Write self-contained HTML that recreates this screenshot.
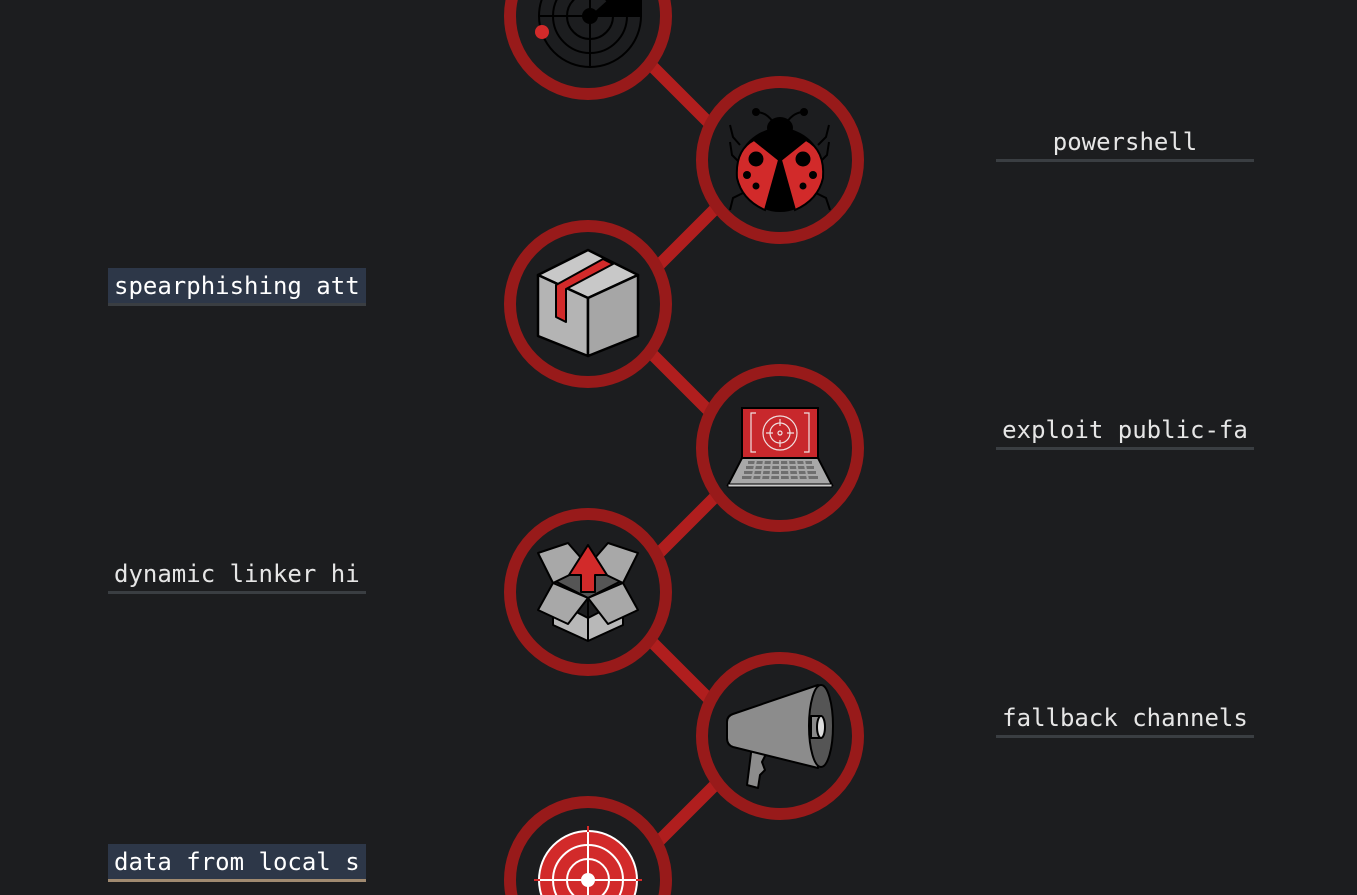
<!DOCTYPE html>
<html><head><meta charset="utf-8"><style>
html,body{margin:0;padding:0;background:#1c1d1f;width:1357px;height:895px;overflow:hidden;position:relative}
.lbl{position:absolute;width:258px;height:35px;border-bottom:3px solid #3a3e42;font-family:"DejaVu Sans Mono","Liberation Mono",monospace;font-size:24px;color:#e6e6e6;line-height:36px;box-sizing:content-box;white-space:nowrap;overflow:hidden}
.l{left:108px;text-indent:6px}
.r{left:996px;text-align:center}
.hl{background:#2d3748;color:#fff}
svg{position:absolute;left:0;top:0}
</style></head><body>
<svg width="1357" height="895" viewBox="0 0 1357 895">
<g stroke="#b01e1e" stroke-width="12">
<line x1="640" y1="54" x2="720" y2="134"/><line x1="640" y1="342" x2="720" y2="422"/><line x1="640" y1="630" x2="720" y2="710"/>
<line x1="722" y1="202" x2="650" y2="274"/><line x1="722" y1="490" x2="650" y2="562"/><line x1="722" y1="778" x2="650" y2="850"/>
</g>
<g fill="#1c1d1f" stroke="#981a1a" stroke-width="12">
<circle cx="588" cy="16" r="78"/><circle cx="780" cy="160" r="78"/><circle cx="588" cy="304" r="78"/>
<circle cx="780" cy="448" r="78"/><circle cx="588" cy="592" r="78"/><circle cx="780" cy="736" r="78"/>
<circle cx="588" cy="880" r="78"/>
</g>
<!-- radar -->
<g fill="none" stroke="#000" stroke-width="2">
<circle cx="590" cy="16" r="51"/><circle cx="590" cy="16" r="37"/><circle cx="590" cy="16" r="23"/>
<line x1="590" y1="-40" x2="590" y2="68"/><line x1="538" y1="16" x2="642" y2="16"/>
</g>
<path d="M590 16 L610 -2 L642 -8 L642 16Z" fill="#000"/>
<circle cx="590" cy="16" r="8" fill="#000"/>
<circle cx="542" cy="32" r="7" fill="#d22a2a"/>
<!-- ladybug -->
<g stroke="#000" stroke-width="2" fill="none">
<path d="M773 122 Q766 112 756 112 M787 122 Q794 112 804 112"/>
<path d="M740 145 L733 137 L730 125 M742 165 L732 155 L730 142 M745 192 L733 198 L730 210 M818 145 L826 137 L829 125 M817 165 L827 155 L829 142 M814 192 L826 198 L830 210"/>
</g>
<circle cx="756" cy="112" r="4"/><circle cx="804" cy="112" r="4"/>
<ellipse cx="780" cy="128" rx="13" ry="11"/>
<ellipse cx="780" cy="170" rx="43" ry="42" fill="#000"/>
<path d="M779 160 L765 210 Q742 200 737 178 Q735 150 754 140Z" fill="#d22a2a" stroke="#000" stroke-width="2"/>
<path d="M781 160 L795 210 Q818 200 823 178 Q825 150 806 140Z" fill="#d22a2a" stroke="#000" stroke-width="2"/>
<circle cx="756" cy="159" r="7.5"/><circle cx="803" cy="159" r="7.5"/>
<circle cx="747" cy="175" r="4"/><circle cx="813" cy="175" r="4"/>
<circle cx="756" cy="186" r="3.5"/><circle cx="803" cy="186" r="3.5"/>
<!-- box -->
<g stroke="#000" stroke-width="2.5" stroke-linejoin="round">
<path d="M538 275 L588 250 L638 275 L588 298Z" fill="#c8c8c8"/>
<path d="M538 275 L588 298 L588 356 L538 336Z" fill="#b4b4b4"/>
<path d="M638 275 L588 298 L588 356 L638 336Z" fill="#a6a6a6"/>
<path d="M556 285 L603 259 L613 264 L566 289 L566 322 L556 317Z" fill="#d22a2a" stroke-width="2"/>
</g>
<!-- laptop -->
<rect x="742" y="408" width="76" height="50" fill="#c8282c" stroke="#000" stroke-width="2"/>
<g stroke="#f0e0e0" fill="none" stroke-width="1.2">
<path d="M756 413 H751 V452 H756 M804 413 H809 V452 H804"/>
<circle cx="780" cy="433" r="17"/><circle cx="780" cy="433" r="10"/><circle cx="780" cy="433" r="2"/>
<path d="M780 419 V426 M780 440 V447 M766 433 H773 M787 433 H794"/>
</g>
<path d="M742 458 L818 458 L832 485 L728 485Z" fill="#a8a8a8" stroke="#000" stroke-width="2"/>
<g fill="#6e6e6e">
<rect x="748" y="461" width="64" height="3"/><rect x="746" y="466" width="68" height="3"/><rect x="744" y="471" width="72" height="3"/><rect x="742" y="476" width="76" height="3"/>
</g>
<g stroke="#a8a8a8" stroke-width="2">
<path d="M756 460 L752 480 M764 460 L761 480 M772 460 L770 480 M780 460 V480 M788 460 L790 480 M796 460 L799 480 M804 460 L808 480"/>
</g>
<rect x="728" y="484" width="104" height="3" fill="#ccc" stroke="#000"/>
<!-- open box -->
<g stroke="#000" stroke-width="2" stroke-linejoin="round">
<path d="M553 600 L588 618 L623 600 L623 625 L588 641 L553 625Z" fill="#b8b8b8"/>
<path d="M553 580 L588 566 L623 580 L588 598Z" fill="#555"/>
<path d="M538 553 L568 543 L588 566 L553 583Z" fill="#a8a8a8"/>
<path d="M638 553 L608 543 L588 566 L623 583Z" fill="#a8a8a8"/>
<path d="M553 583 L588 598 L568 624 L538 610Z" fill="#a8a8a8"/>
<path d="M623 583 L588 598 L608 624 L638 610Z" fill="#a8a8a8"/>
<line x1="588" y1="598" x2="588" y2="641"/>
<path d="M581 592 L581 575 L569 575 L588 545 L607 575 L595 575 L595 592Z" fill="#d22a2a"/>
</g>
<!-- megaphone -->
<g stroke="#000" stroke-width="2" stroke-linejoin="round">
<path d="M752 745 L747 785 L758 788 L760 775 L765 770 L762 762 L768 750Z" fill="#8c8c8c"/>
<path d="M733 714 L818 685 L818 768 L733 747 Q727 745 727 738 L727 722 Q727 716 733 714Z" fill="#8c8c8c"/>
<ellipse cx="821" cy="726" rx="12" ry="41" fill="#555"/>
<rect x="811" y="716" width="10" height="22" fill="#888"/>
<ellipse cx="821" cy="727" rx="4" ry="11" fill="#ddd"/>
</g>
<!-- target -->
<circle cx="588" cy="880" r="49" fill="#d22a2a" stroke="#fff" stroke-width="2"/>
<g fill="none" stroke="#fff" stroke-width="2"><circle cx="588" cy="880" r="35"/><circle cx="588" cy="880" r="21"/>
<line x1="588" y1="826" x2="588" y2="895"/><line x1="534" y1="880" x2="642" y2="880"/></g>
<path d="M588 826 V832 M534 880 H540 M636 880 H642" stroke="#d22a2a" stroke-width="2"/>
<circle cx="588" cy="880" r="7" fill="#fff"/>
</svg>
<div class="lbl r" style="top:124px">powershell</div>
<div class="lbl l hl" style="top:268px">spearphishing att</div>
<div class="lbl r" style="top:412px">exploit public-fa</div>
<div class="lbl l" style="top:556px">dynamic linker hi</div>
<div class="lbl r" style="top:700px">fallback channels</div>
<div class="lbl l hl" style="top:844px;border-bottom-color:#a08a70">data from local s</div>
</body></html>
